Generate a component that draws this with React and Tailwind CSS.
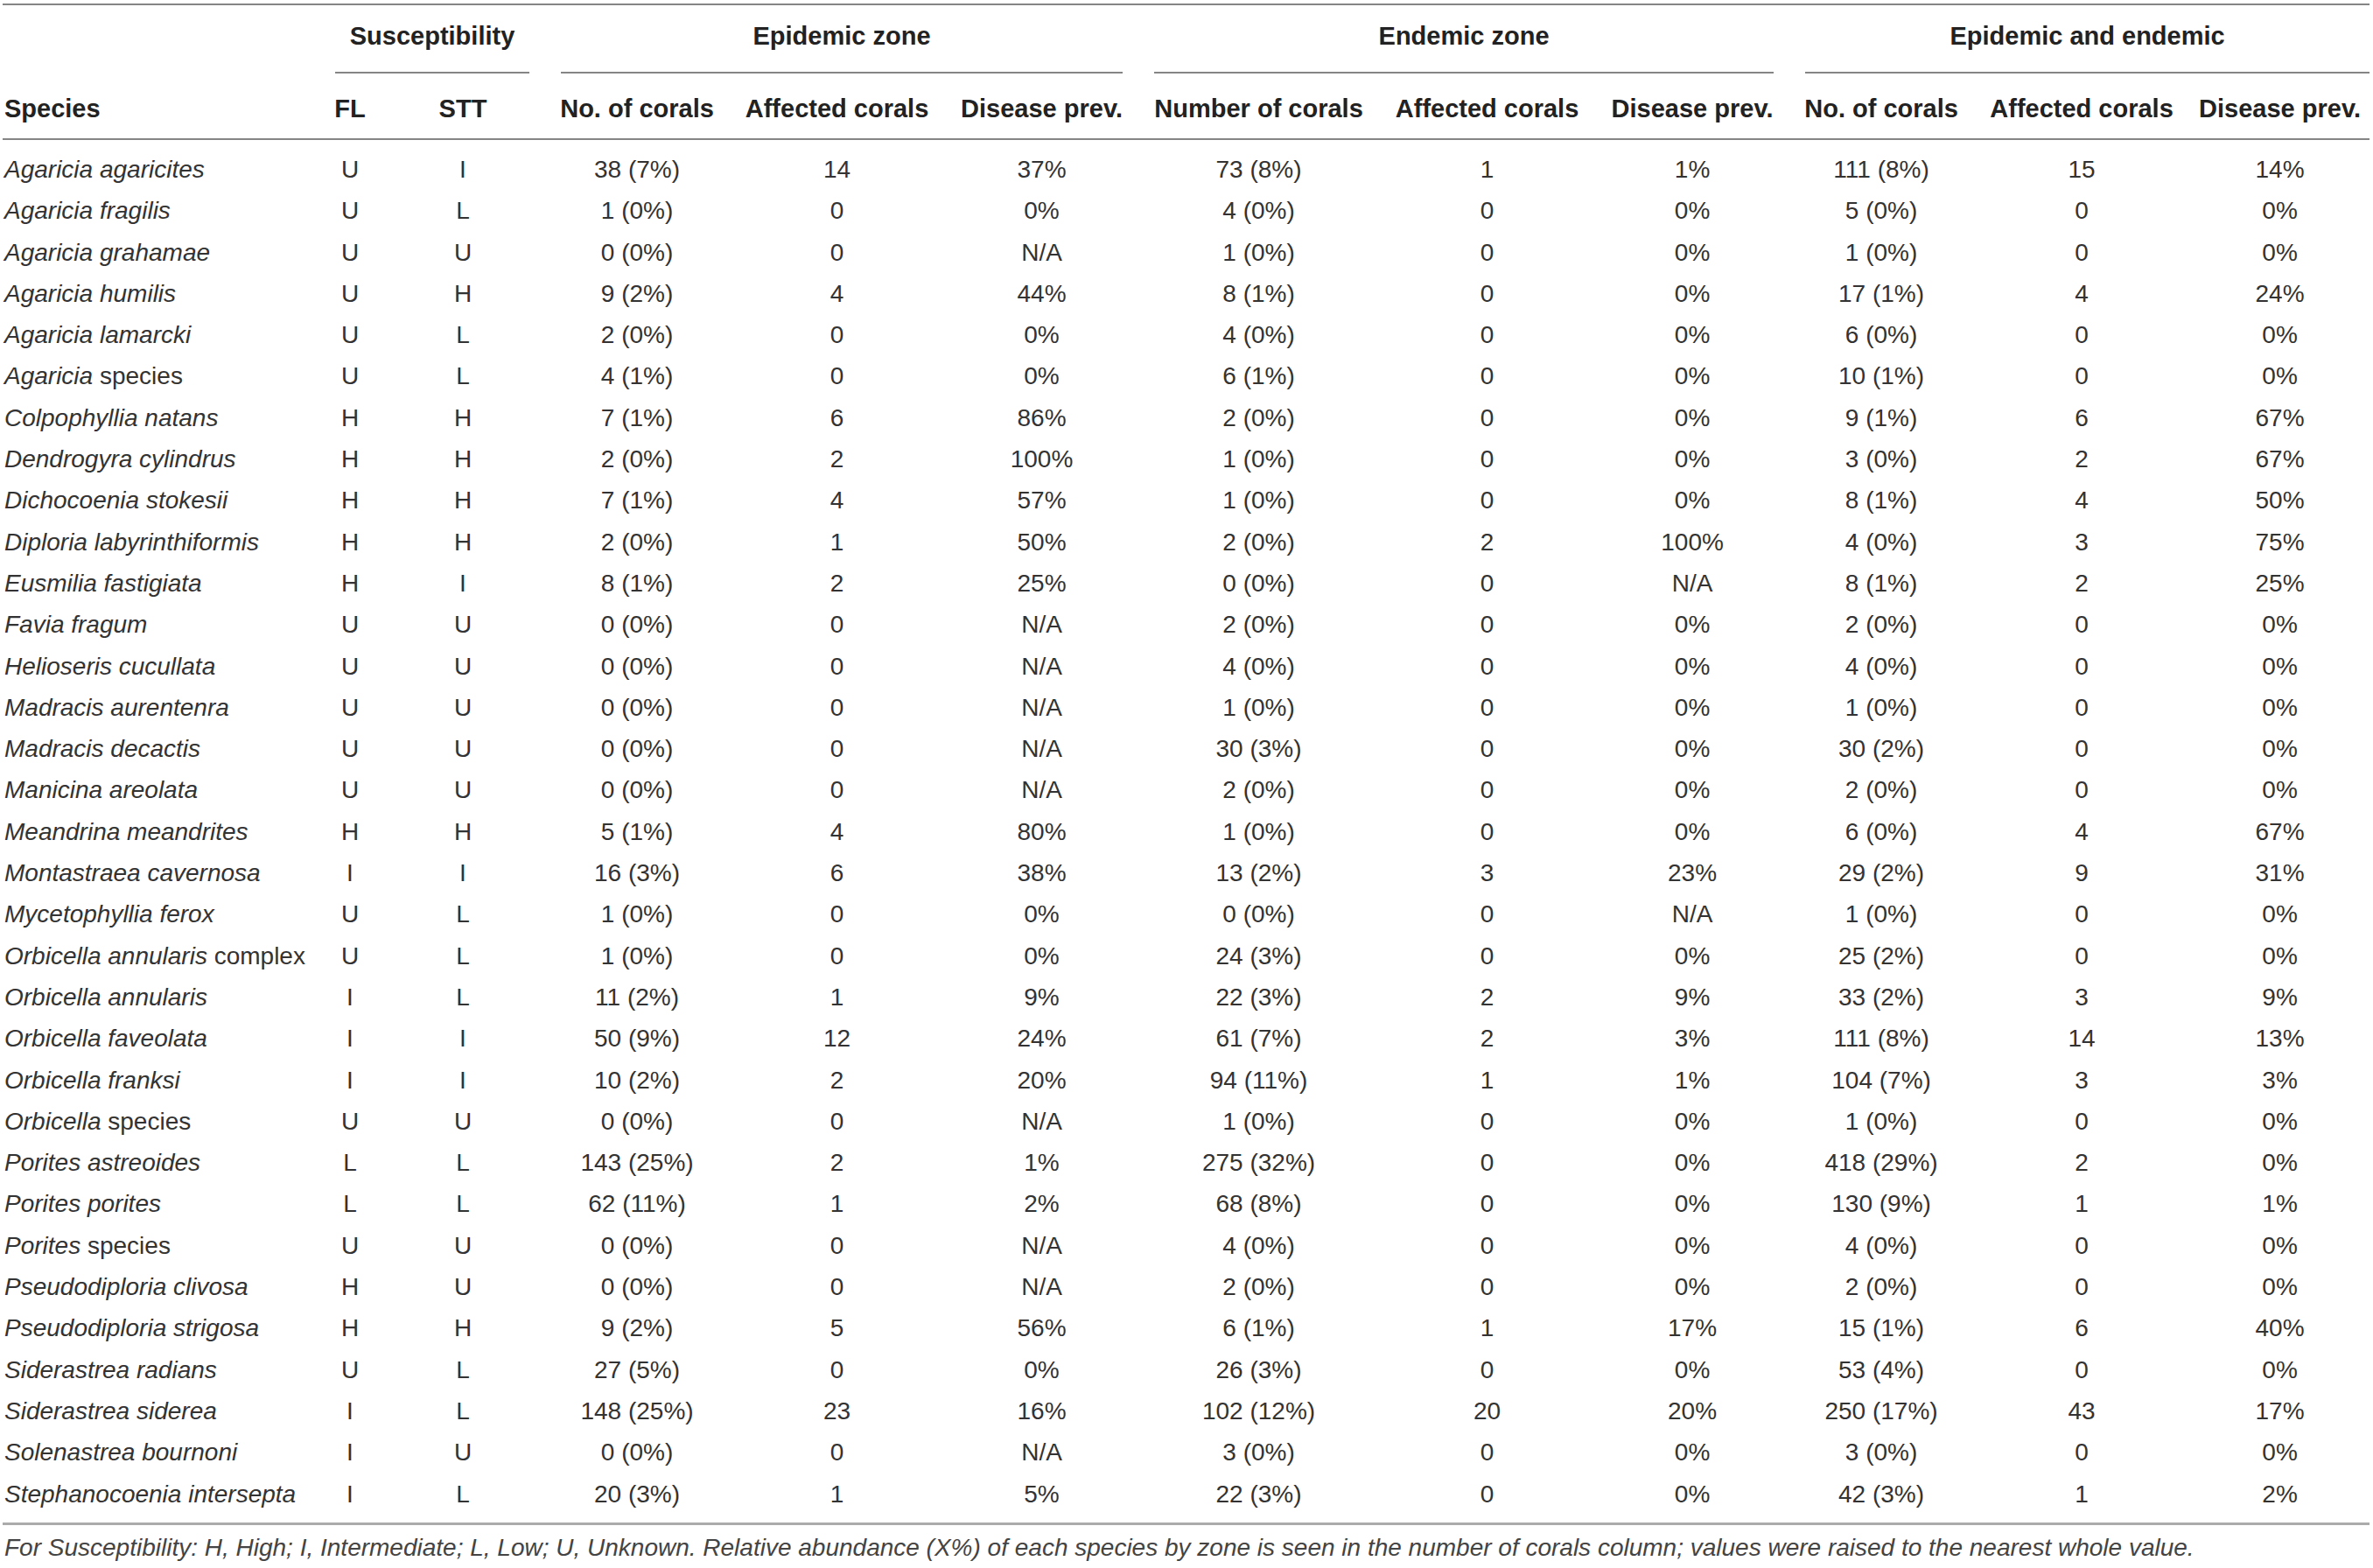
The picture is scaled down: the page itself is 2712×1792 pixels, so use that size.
const rows = [
  ["Agaricia agaricites", "U", "I", "38 (7%)", "14", "37%", "73 (8%)", "1", "1%", "111 (8%)", "15", "14%"],
  ["Agaricia fragilis", "U", "L", "1 (0%)", "0", "0%", "4 (0%)", "0", "0%", "5 (0%)", "0", "0%"],
  ["Agaricia grahamae", "U", "U", "0 (0%)", "0", "N/A", "1 (0%)", "0", "0%", "1 (0%)", "0", "0%"],
  ["Agaricia humilis", "U", "H", "9 (2%)", "4", "44%", "8 (1%)", "0", "0%", "17 (1%)", "4", "24%"],
  ["Agaricia lamarcki", "U", "L", "2 (0%)", "0", "0%", "4 (0%)", "0", "0%", "6 (0%)", "0", "0%"],
  ["Agaricia|species", "U", "L", "4 (1%)", "0", "0%", "6 (1%)", "0", "0%", "10 (1%)", "0", "0%"],
  ["Colpophyllia natans", "H", "H", "7 (1%)", "6", "86%", "2 (0%)", "0", "0%", "9 (1%)", "6", "67%"],
  ["Dendrogyra cylindrus", "H", "H", "2 (0%)", "2", "100%", "1 (0%)", "0", "0%", "3 (0%)", "2", "67%"],
  ["Dichocoenia stokesii", "H", "H", "7 (1%)", "4", "57%", "1 (0%)", "0", "0%", "8 (1%)", "4", "50%"],
  ["Diploria labyrinthiformis", "H", "H", "2 (0%)", "1", "50%", "2 (0%)", "2", "100%", "4 (0%)", "3", "75%"],
  ["Eusmilia fastigiata", "H", "I", "8 (1%)", "2", "25%", "0 (0%)", "0", "N/A", "8 (1%)", "2", "25%"],
  ["Favia fragum", "U", "U", "0 (0%)", "0", "N/A", "2 (0%)", "0", "0%", "2 (0%)", "0", "0%"],
  ["Helioseris cucullata", "U", "U", "0 (0%)", "0", "N/A", "4 (0%)", "0", "0%", "4 (0%)", "0", "0%"],
  ["Madracis aurentenra", "U", "U", "0 (0%)", "0", "N/A", "1 (0%)", "0", "0%", "1 (0%)", "0", "0%"],
  ["Madracis decactis", "U", "U", "0 (0%)", "0", "N/A", "30 (3%)", "0", "0%", "30 (2%)", "0", "0%"],
  ["Manicina areolata", "U", "U", "0 (0%)", "0", "N/A", "2 (0%)", "0", "0%", "2 (0%)", "0", "0%"],
  ["Meandrina meandrites", "H", "H", "5 (1%)", "4", "80%", "1 (0%)", "0", "0%", "6 (0%)", "4", "67%"],
  ["Montastraea cavernosa", "I", "I", "16 (3%)", "6", "38%", "13 (2%)", "3", "23%", "29 (2%)", "9", "31%"],
  ["Mycetophyllia ferox", "U", "L", "1 (0%)", "0", "0%", "0 (0%)", "0", "N/A", "1 (0%)", "0", "0%"],
  ["Orbicella annularis|complex", "U", "L", "1 (0%)", "0", "0%", "24 (3%)", "0", "0%", "25 (2%)", "0", "0%"],
  ["Orbicella annularis", "I", "L", "11 (2%)", "1", "9%", "22 (3%)", "2", "9%", "33 (2%)", "3", "9%"],
  ["Orbicella faveolata", "I", "I", "50 (9%)", "12", "24%", "61 (7%)", "2", "3%", "111 (8%)", "14", "13%"],
  ["Orbicella franksi", "I", "I", "10 (2%)", "2", "20%", "94 (11%)", "1", "1%", "104 (7%)", "3", "3%"],
  ["Orbicella|species", "U", "U", "0 (0%)", "0", "N/A", "1 (0%)", "0", "0%", "1 (0%)", "0", "0%"],
  ["Porites astreoides", "L", "L", "143 (25%)", "2", "1%", "275 (32%)", "0", "0%", "418 (29%)", "2", "0%"],
  ["Porites porites", "L", "L", "62 (11%)", "1", "2%", "68 (8%)", "0", "0%", "130 (9%)", "1", "1%"],
  ["Porites|species", "U", "U", "0 (0%)", "0", "N/A", "4 (0%)", "0", "0%", "4 (0%)", "0", "0%"],
  ["Pseudodiploria clivosa", "H", "U", "0 (0%)", "0", "N/A", "2 (0%)", "0", "0%", "2 (0%)", "0", "0%"],
  ["Pseudodiploria strigosa", "H", "H", "9 (2%)", "5", "56%", "6 (1%)", "1", "17%", "15 (1%)", "6", "40%"],
  ["Siderastrea radians", "U", "L", "27 (5%)", "0", "0%", "26 (3%)", "0", "0%", "53 (4%)", "0", "0%"],
  ["Siderastrea siderea", "I", "L", "148 (25%)", "23", "16%", "102 (12%)", "20", "20%", "250 (17%)", "43", "17%"],
  ["Solenastrea bournoni", "I", "U", "0 (0%)", "0", "N/A", "3 (0%)", "0", "0%", "3 (0%)", "0", "0%"],
  ["Stephanocoenia intersepta", "I", "L", "20 (3%)", "1", "5%", "22 (3%)", "0", "0%", "42 (3%)", "1", "2%"],
];

const groups = [
  { label: "Susceptibility", span: 2, pad: "px-[18px]" },
  { label: "Epidemic zone", span: 3, pad: "px-[18px]" },
  { label: "Endemic zone", span: 3, pad: "px-[18px]" },
  { label: "Epidemic and endemic", span: 3, pad: "pl-[18px] pr-0" },
];

const heads = [
  "FL", "STT",
  "No. of corals", "Affected corals", "Disease prev.",
  "Number of corals", "Affected corals", "Disease prev.",
  "No. of corals", "Affected corals", "Disease prev.",
];

// species names: "Genus|word" keeps the trailing word upright
const SpeciesName = ({ name }) => {
  const [italic, plain] = name.split("|");
  return (
    <>
      <span className="italic">{italic}</span>
      {plain && <span> {plain}</span>}
    </>
  );
};

export default function App() {
  return (
    <div className="bg-white min-h-screen pt-[4px] font-['Liberation_Sans',Arial,sans-serif]">
      <table className="table-fixed border-separate border-spacing-0 w-[2705px] ml-[3px]">
        <colgroup>
          <col className="w-[362px]" />
          <col className="w-[70px]" />
          <col className="w-[188px]" />
          <col className="w-[210px]" />
          <col className="w-[247px]" />
          <col className="w-[221px]" />
          <col className="w-[275px]" />
          <col className="w-[247px]" />
          <col className="w-[222px]" />
          <col className="w-[210px]" />
          <col className="w-[248px]" />
          <col className="w-[205px]" />
        </colgroup>
        <thead className="text-[29px] font-bold text-[#222]">
          <tr>
            <th className="p-0 border-t-2 border-[#858585]" />
            {groups.map((g) => (
              <th key={g.label} colSpan={g.span} className={`${g.pad} py-0 border-t-2 border-[#858585] font-bold`}>
                <div className="pt-[17px] pb-[23px] leading-[36px] text-center whitespace-nowrap border-b-2 border-[#858585]">
                  {g.label}
                </div>
              </th>
            ))}
          </tr>
          <tr>
            <th className="pl-[2px] pt-[22px] pb-[16px] leading-[36px] text-left border-b-2 border-[#858585]">
              Species
            </th>
            {heads.map((h, i) => (
              <th
                key={i}
                className="px-0 pt-[22px] pb-[16px] leading-[36px] text-center whitespace-nowrap border-b-2 border-[#858585]"
              >
                {h}
              </th>
            ))}
          </tr>
        </thead>
        <tbody className="text-[28px] text-[#333]">
          <tr>
            <td colSpan={12} className="h-[10px] p-0" />
          </tr>
          {rows.map((r) => (
            <tr key={r[0]}>
              <td className="pl-[2px] py-0 leading-[47.3px] whitespace-nowrap">
                <SpeciesName name={r[0]} />
              </td>
              {r.slice(1).map((v, i) => (
                <td key={i} className="p-0 leading-[47.3px] text-center whitespace-nowrap">
                  {v}
                </td>
              ))}
            </tr>
          ))}
          <tr>
            <td colSpan={12} className="h-[12px] p-0 border-b-[3px] border-[#ababab]" />
          </tr>
        </tbody>
      </table>
      <p className="ml-[5px] mt-[10px] text-[28px] leading-[32px] italic text-[#444] whitespace-nowrap">
        For Susceptibility: H, High; I, Intermediate; L, Low; U, Unknown. Relative abundance (X%) of each species by zone is seen in the number of corals column; values were raised to the nearest whole value.
      </p>
    </div>
  );
}
